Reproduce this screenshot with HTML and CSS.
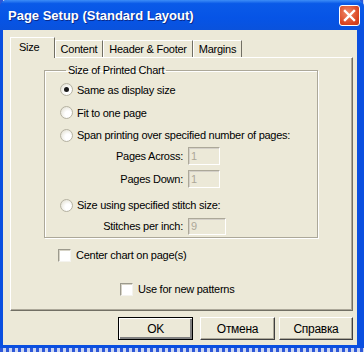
FILE: index.html
```html
<!DOCTYPE html>
<html lang="en">
<head>
  <meta charset="UTF-8" />
  <title>Page Setup</title>
  <link rel="stylesheet" href="styles.css">
</head>
<body>
  <div class="window">
    <!-- title bar -->
    <div class="titlebar">
      <span class="title">Page Setup (Standard Layout)</span>
      <span class="close">
        <svg width="13" height="13" viewBox="0 0 13 13">
          <path d="M2 2 L11 11 M11 2 L2 11" stroke="#fff" stroke-width="2.4" stroke-linecap="square"/>
        </svg>
      </span>
    </div>

    <div class="client">
      <!-- tabs -->
      <div class="tabs">
        <div class="tab active">Size</div>
        <div class="tab">Content</div>
        <div class="tab">Header &amp; Footer</div>
        <div class="tab">Margins</div>
      </div>

      <div class="panel">
        <fieldset class="group">
          <legend>Size of Printed Chart</legend>
          <div class="row r1"><span class="radio checked"></span>Same as display size</div>
          <div class="row r2"><span class="radio"></span>Fit to one page</div>
          <div class="row r3"><span class="radio"></span>Span printing over specified number of pages:</div>
          <div class="row field r4"><span class="label">Pages Across:</span><span class="input">1</span></div>
          <div class="row field r5"><span class="label">Pages Down:</span><span class="input">1</span></div>
          <div class="row r6"><span class="radio"></span>Size using specified stitch size:</div>
          <div class="row field r7"><span class="label">Stitches per inch:</span><span class="input wide">9</span></div>
        </fieldset>

        <div class="row check-center"><span class="check"></span>Center chart on page(s)</div>
        <div class="row check-new"><span class="check"></span>Use for new patterns</div>
      </div>

      <!-- buttons -->
      <div class="buttons">
        <button class="btn default">OK</button>
        <button class="btn cancel">Отмена</button>
        <button class="btn help">Справка</button>
      </div>
    </div>
  </div>
</body>
</html>
```

FILE: styles.css
```css
* {
  box-sizing: border-box;
  margin: 0;
  padding: 0;
}
body {
  width: 364px;
  height: 352px;
  overflow: hidden;
  background: repeating-linear-gradient(90deg, #2d58d8 0 3px, #c9d4f2 3px 6px);
  font-family: "Liberation Sans", Arial, sans-serif;
  font-size: 11px;
  letter-spacing: -0.25px;
  color: #000;
}
/* window frame */
.window {
  width: 364px;
  height: 348px;
  background: #0a4fe0;
  border-radius: 7px 7px 0 0;
  display: flex;
  flex-direction: column;
  padding: 0 7px 3px 3px;
}
.titlebar {
  height: 30px;
  margin: 0 -7px 0 -3px;
  border-radius: 7px 7px 0 0;
  background: linear-gradient(#3d8df7 0%, #0a5ae8 12%, #0654e6 60%, #0a52dc 100%);
  display: flex;
  align-items: center;
  padding: 0 4px 0 8px;
}
.title {
  flex: 1;
  color: #fff;
  font-weight: bold;
  font-size: 13px;
  letter-spacing: 0;
  text-shadow: 1px 1px #0a2a8a;
}
.close {
  width: 21px;
  height: 21px;
  border: 1px solid #fff;
  border-radius: 3px;
  background: radial-gradient(circle at 40% 35%, #f08a6a, #d9421e 70%, #c33a18);
  display: flex;
  align-items: center;
  justify-content: center;
}
.client {
  flex: 1;
  background: #ece9d8;
  padding: 7px 4px 0 7px;
  display: flex;
  flex-direction: column;
}
/* tabs */
.tabs {
  display: flex;
  align-items: flex-end;
  height: 20px;
  position: relative;
  z-index: 1;
}
.tab {
  height: 17px;
  white-space: nowrap;
  border: 1px solid #fff;
  border-bottom: none;
  border-right-color: #716f64;
  display: flex;
  align-items: center;
  justify-content: center;
  background: #ece9d8;
}
.tab.active {
  height: 21px;
  width: 45px;
  margin-bottom: -1px;
  justify-content: flex-start;
  padding: 0 0 2px 8px;
}
.tab:nth-child(2) { width: 48px; }
.tab:nth-child(3) { width: 90px; }
.tab:nth-child(4) { width: 49px; }
/* panel */
.panel {
  width: 343px;
  height: 254px;
  border: 1px solid #fff;
  border-right-color: #716f64;
  border-bottom-color: #716f64;
  box-shadow: inset -1px -1px #aca899;
  padding: 5px 0 0 33px;
}
.group {
  width: 274px;
  height: 175px;
  border: 1px solid #aca899;
  box-shadow: inset 1px 1px #fff, 1px 1px #fff;
  padding: 0 0 0 15px;
}
.group legend {
  padding: 0 2px;
  margin-left: 6px;
  line-height: 14px;
}
.row {
  display: flex;
  align-items: center;
  white-space: nowrap;
}
.r1 { height: 23px; margin-top: 1px; }
.r2 { height: 23px; }
.r3 { height: 22px; }
.r4 { height: 20px; }
.r5 { height: 20px; margin-top: 3px; }
.r6 { height: 22px; margin-top: 5px; }
.r7 { height: 20px; }
.radio {
  width: 13px;
  height: 13px;
  border-radius: 50%;
  border: 1px solid #b5b2a2;
  background: radial-gradient(circle at 65% 65%, #fff 30%, #dcd9c8 100%);
  margin-right: 4px;
  display: flex;
  align-items: center;
  justify-content: center;
}
.radio.checked::after {
  content: "";
  width: 5px;
  height: 5px;
  border-radius: 50%;
  background: #1a1a1a;
}
.field .label {
  width: 123px;
  text-align: right;
  margin-right: 5px;
}
.input {
  width: 32px;
  height: 18px;
  border: 1px solid #aca899;
  border-right-color: #fff;
  border-bottom-color: #fff;
  box-shadow: inset 1px 1px #d4d0c8;
  color: #aca899;
  padding-left: 2px;
  display: flex;
  align-items: center;
}
.input.wide {
  width: 38px;
  height: 17px;
}
.check {
  width: 13px;
  height: 13px;
  background: #fff;
  border: 1px solid #9c9a8d;
  border-right-color: #f4f3ee;
  border-bottom-color: #f4f3ee;
  box-shadow: inset 1px 1px #d6d3c6;
  margin-right: 5px;
}
.check-center {
  height: 20px;
  margin: 7px 0 0 14px;
}
.check-new {
  height: 20px;
  margin: 14px 0 0 76px;
}
/* buttons */
.buttons {
  display: flex;
  justify-content: flex-end;
  margin-top: 6px;
}
.btn {
  width: 75px;
  height: 23px;
  font-family: "Liberation Sans", Arial, sans-serif;
  font-size: 12px;
  letter-spacing: -0.3px;
  background: #ece9d8;
  border: 1px solid #fff;
  border-right-color: #404040;
  border-bottom-color: #404040;
  box-shadow: inset -1px -1px #aca899;
}
.btn.default {
  border: 1px solid #000;
  box-shadow: inset 1px 1px #fff, inset -2px -2px #808080;
}
.btn.cancel { margin-left: 7px; }
.btn.help { margin-left: 4px; width: 74px; }
```
